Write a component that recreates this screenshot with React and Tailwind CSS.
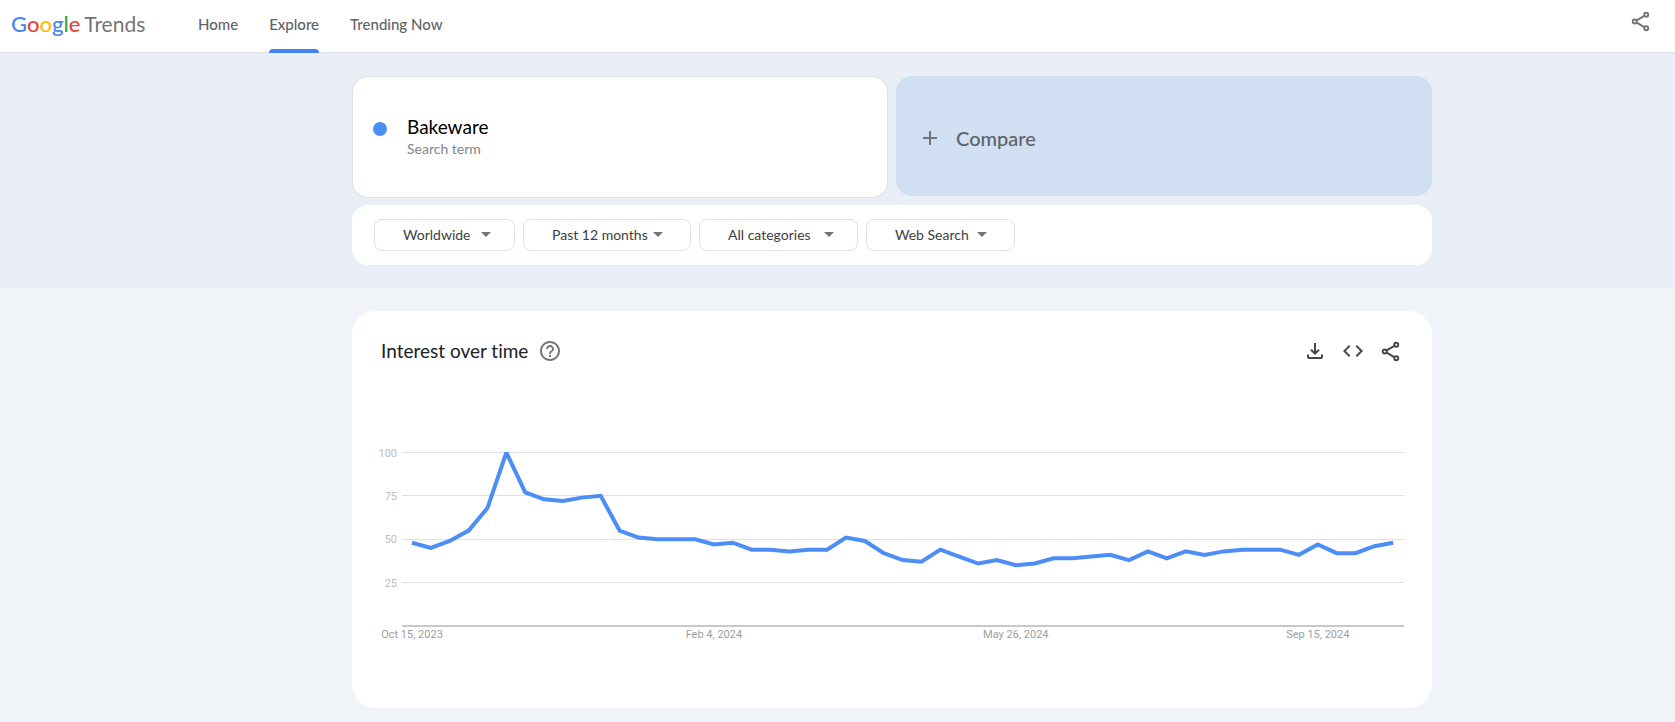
import React from 'react';
import { MdAdd, MdCode, MdHelpOutline } from 'react-icons/md';

const interest = [
  48, 45, 49, 55, 68, 100, 77, 73, 72, 74, 75, 55, 51, 50, 50, 50, 47, 48,
  44, 44, 43, 44, 44, 51, 49, 42, 38, 37, 44, 40, 36, 38, 35, 36, 39, 39,
  40, 41, 38, 43, 39, 43, 41, 43, 44, 44, 44, 41, 47, 42, 42, 46, 48,
];

const dates = [
  { week: 0, label: 'Oct 15, 2023' },
  { week: 16, label: 'Feb 4, 2024' },
  { week: 32, label: 'May 26, 2024' },
  { week: 48, label: 'Sep 15, 2024' },
];

const xOf = (week) => 60 + week * 18.87;
const yOf = (value) => 184 - value * 1.735;

const ShareIcon = () => (
  <svg viewBox="0 0 24 24" className="h-[23px] w-[23px] fill-none stroke-current stroke-2">
    <circle cx="18" cy="5" r="2.1" />
    <circle cx="6" cy="12" r="2.1" />
    <circle cx="18" cy="19" r="2.1" />
    <path d="M8 10.9l8-4.8M8 13.1l8 4.8" />
  </svg>
);

const DownloadIcon = () => (
  <svg viewBox="0 0 24 24" className="h-6 w-6 fill-none stroke-current stroke-2">
    <path d="M12 4v10.500M8 10.700l4 4 4-4M5 15.500V18a1 1 0 0 0 1 1h12a1 1 0 0 0 1-1v-2.500" />
  </svg>
);

const Logo = () => (
  <a href="#" className="flex w-[160px] items-baseline gap-1 pb-1 text-[21px] leading-7">
    <span className="text-[22px] font-medium">
      <span className="text-[#4285f4]">G</span>
      <span className="text-[#ea4335]">o</span>
      <span className="text-[#fbbc05]">o</span>
      <span className="text-[#4285f4]">g</span>
      <span className="text-[#34a853]">l</span>
      <span className="text-[#ea4335]">e</span>
    </span>
    <span className="text-[#757575]">Trends</span>
  </a>
);

const Header = () => (
  <header className="flex h-[53px] items-center justify-between border-b border-[#dfe0e3] bg-white pl-[11px] pr-[23px]">
    <div className="flex h-full items-center">
      <Logo />
      <nav className="ml-[27px] flex h-full gap-[31px] text-[15px] font-medium text-[#5f6368]">
        <a href="#" className="flex items-center pb-1">Home</a>
        <a href="#" className="relative flex items-center pb-1">
          Explore
          <span className="absolute inset-x-0 -bottom-px h-1 rounded-t bg-[#4285f4]"></span>
        </a>
        <a href="#" className="flex items-center pb-1">Trending Now</a>
      </nav>
    </div>
    <button aria-label="Share" className="mb-[10px] text-[#757575]">
      <ShareIcon />
    </button>
  </header>
);

const Filter = ({ label, value, width, arrow }) => (
  <div className={`relative h-8 ${width}`}>
    <select
      aria-label={label}
      className="h-full w-full appearance-none rounded-lg border border-[#dfe0e3] bg-white pl-7 text-sm text-[#3c4043]"
    >
      <option>{value}</option>
    </select>
    <svg viewBox="0 0 10 5" className={`pointer-events-none absolute top-[13px] h-[5px] w-[10px] fill-[#757575] ${arrow}`}>
      <path d="M0 0h10L5 5z" />
    </svg>
  </div>
);

const Chart = () => (
  <svg viewBox="0 0 1080 210" className="block w-full" role="img" aria-label="Interest over time">
    <clipPath id="plot">
      <rect x="50" y="10" width="1002" height="174" />
    </clipPath>
    {[100, 75, 50, 25].map((tick) => (
      <g key={tick}>
        <rect x="50" y={Math.floor(yOf(tick))} width="1002" height="1" fill="#e0e0e0" />
        <text x="45" y={yOf(tick) + 4} textAnchor="end" fontSize="11" fill="#bdbdbd">{tick}</text>
      </g>
    ))}
    <rect x="50" y="183" width="1002" height="2" fill="#c8c8c8" />
    <polyline
      clipPath="url(#plot)"
      points={interest.map((value, week) => `${xOf(week)},${yOf(value)}`).join(' ')}
      fill="none"
      stroke="#4c8df6"
      strokeWidth="4"
    />
    {dates.map((date) => (
      <text key={date.label} x={xOf(date.week)} y="196" textAnchor="middle" fontSize="11" fill="#9e9e9e">
        {date.label}
      </text>
    ))}
  </svg>
);

const App = () => {
  return (
    <div className="min-h-screen bg-[#f0f4f9] font-['Lato',sans-serif] [font-variant-ligatures:none]">
      <Header />
      <section className="bg-[#e9eef7] pb-[23px] pl-[109px] pt-[23px]">
        <div className="mx-auto max-w-[1080px]">
          <div className="grid grid-cols-2 items-start gap-2">
            <div className="flex h-[122px] items-center rounded-2xl border border-[#dfe0e3] bg-white pl-5">
              <span className="mb-4 h-[14px] w-[14px] rounded-full bg-[#4c8df6]"></span>
              <div className="ml-5">
                <div className="text-[19px] leading-6 text-black">Bakeware</div>
                <div className="text-sm leading-5 text-[#80868b]">Search term</div>
              </div>
            </div>
            <button className="flex h-[120px] items-center gap-[14px] rounded-2xl bg-[#d1dff2] pl-[22px] pt-[3px] text-[20px] font-medium text-[#5f6368]">
              <MdAdd size={24} className="text-[#757575]" />
              Compare
            </button>
          </div>
          <div className="mt-[7px] flex h-[60px] items-center gap-2 rounded-2xl bg-white pl-[22px]">
            <Filter label="Region" value="Worldwide" width="w-[141px]" arrow="right-[24px]" />
            <Filter label="Time range" value="Past 12 months" width="w-[168px]" arrow="right-[28px]" />
            <Filter label="Category" value="All categories" width="w-[159px]" arrow="right-[24px]" />
            <Filter label="Search type" value="Web Search" width="w-[149px]" arrow="right-[28px]" />
          </div>
        </div>
      </section>
      <main className="pl-[109px] pt-[23px]">
        <section className="mx-auto max-w-[1080px] rounded-3xl bg-white pb-[56px] pt-7">
          <div className="flex h-6 items-center justify-between pl-[29px] pr-[30px]">
            <div className="flex items-center gap-[10px]">
              <h2 className="text-[19px] text-[#202124]">Interest over time</h2>
              <button aria-label="Help" className="text-[#757575]"><MdHelpOutline size={24} /></button>
            </div>
            <div className="flex gap-[14px] text-[#444746]">
              <button aria-label="Download"><DownloadIcon /></button>
              <button aria-label="Embed"><MdCode size={24} /></button>
              <button aria-label="Share chart"><ShareIcon /></button>
            </div>
          </div>
          <div className="mt-[79px] font-['Roboto',sans-serif]">
            <Chart />
          </div>
        </section>
      </main>
    </div>
  );
};

export default App;
